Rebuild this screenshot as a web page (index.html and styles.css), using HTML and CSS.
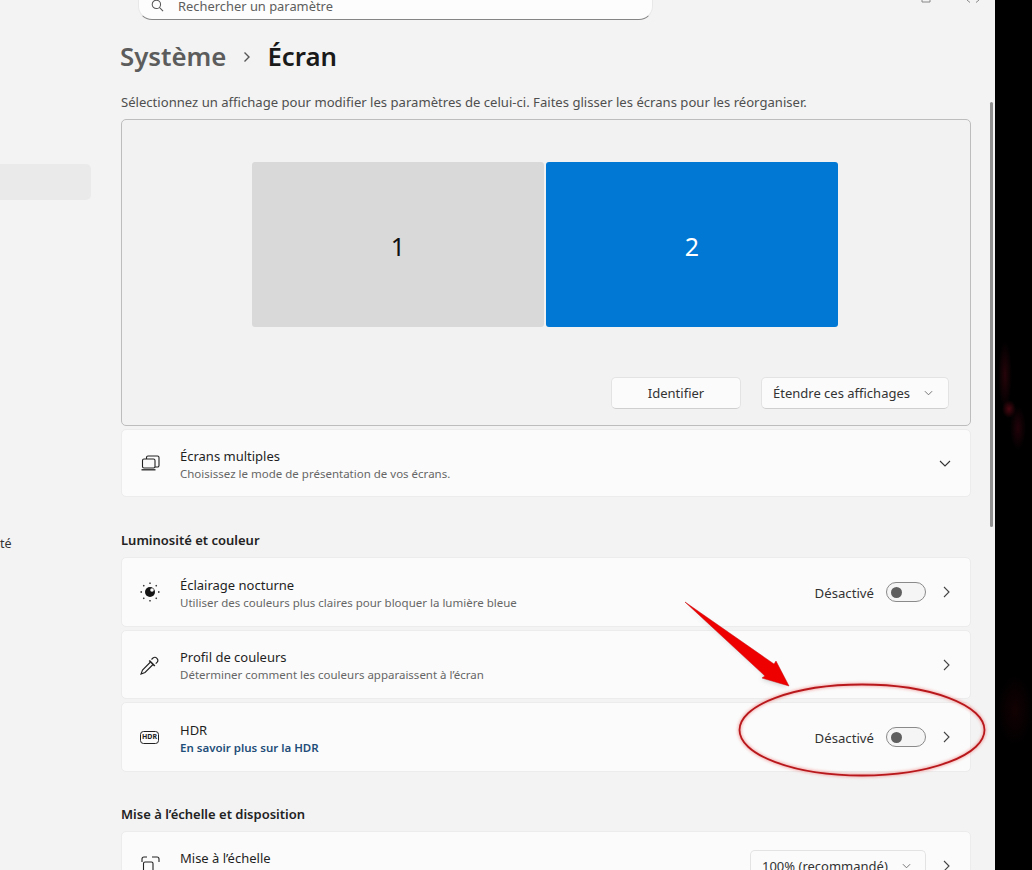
FILE: index.html
```html
<!DOCTYPE html>
<html lang="fr">
<head>
<meta charset="utf-8">
<title>Écran</title>
<link rel="stylesheet" href="styles.css">
</head>
<body>
<div class="window">
  <aside class="sidebar">
    <div class="nav-selected"></div>
    <div class="nav-cut">té</div>
  </aside>
  <main class="main">
    <header class="topbar">
      <div class="search">
        <svg class="search-icon" viewBox="0 0 14 14"><circle cx="5.800" cy="5.800" r="4.500"/><path d="M9 9l4 4"/></svg>
        <span>Rechercher un paramètre</span>
      </div>
    </header>
    <h1 class="crumbs">
      <span class="crumb-parent">Système</span>
      <svg class="crumb-sep" viewBox="0 0 8 12"><path d="M1.500 1.500L6 6l-4.500 4.500"/></svg>
      <span class="crumb-current">Écran</span>
    </h1>
    <p class="lead">Sélectionnez un affichage pour modifier les paramètres de celui-ci. Faites glisser les écrans pour les réorganiser.</p>
    <section class="panel">
      <div class="monitors">
        <div class="monitor">1</div>
        <div class="monitor active">2</div>
      </div>
      <div class="panel-actions">
        <button class="btn btn-identify">Identifier</button>
        <button class="btn btn-extend">Étendre ces affichages
          <svg class="chev-small" viewBox="0 0 10 6"><path d="M1 1l4 4 4-4"/></svg>
        </button>
      </div>
    </section>
    <div class="card card-after-panel">
      <svg class="row-icon" viewBox="0 0 20 20"><path d="M6.500 6V4.500A1.500 1.500 0 0 1 8 3h9.500A1.500 1.500 0 0 1 19 4.500v8a1.500 1.500 0 0 1-1.500 1.500H15"/><rect x="2.500" y="6" width="12.500" height="9" rx="1.500"/><path d="M1.500 16.800h14" class="base"/></svg>
      <div class="row-text"><div class="row-title">Écrans multiples</div><div class="row-sub">Choisissez le mode de présentation de vos écrans.</div></div>
      <svg class="chev-down" viewBox="0 0 12 7"><path d="M1 1l5 5 5-5"/></svg>
    </div>
    <h2 class="section">Luminosité et couleur</h2>
    <div class="card card-night">
      <svg class="row-icon" viewBox="0 0 20 20"><circle cx="10" cy="10" r="5" class="fill"/><circle cx="12" cy="8" r="1.800" class="shine"/><path d="M10 .5V2M10 18v1.500M.5 10H2M18 10h1.500M3.300 3.300l1 1M15.700 15.700l1 1M3.300 16.700l1-1M15.700 4.300l1-1" class="rays"/></svg>
      <div class="row-text"><div class="row-title">Éclairage nocturne</div><div class="row-sub">Utiliser des couleurs plus claires pour bloquer la lumière bleue</div></div>
      <span class="state">Désactivé</span><span class="toggle"><span class="knob"></span></span>
      <svg class="chev-right" viewBox="0 0 7 12"><path d="M1 1l5 5-5 5"/></svg>
    </div>
    <div class="card card-profile">
      <svg class="row-icon" viewBox="0 0 20 20"><path d="M10.500 7L2.500 15 1 19l4-1.500 8-8"/><path d="M9.300 5.500l5.500 5.500" class="collar"/><path d="M11.500 4.500L13 3a3 3 0 0 1 4.200 4.200l-1.500 1.500"/></svg>
      <div class="row-text"><div class="row-title">Profil de couleurs</div><div class="row-sub">Déterminer comment les couleurs apparaissent à l’écran</div></div>
      <svg class="chev-right" viewBox="0 0 7 12"><path d="M1 1l5 5-5 5"/></svg>
    </div>
    <div class="card card-hdr">
      <span class="hdr-icon">HDR</span>
      <div class="row-text"><div class="row-title">HDR</div><div class="row-link">En savoir plus sur la HDR</div></div>
      <span class="state">Désactivé</span><span class="toggle"><span class="knob"></span></span>
      <svg class="chev-right" viewBox="0 0 7 12"><path d="M1 1l5 5-5 5"/></svg>
    </div>
    <h2 class="section section-scale">Mise à l’échelle et disposition</h2>
    <div class="card card-scale">
      <svg class="row-icon" viewBox="0 0 20 20"><path d="M2 12V9a2 2 0 0 1 2-2h3M12 7h5a2 2 0 0 1 2 2v3"/><rect x="3.500" y="12" width="9.500" height="10" rx="1.500"/></svg>
      <div class="row-text"><div class="row-title">Mise à l’échelle</div></div>
      <button class="btn btn-scale">100% (recommandé)
        <svg class="chev-small" viewBox="0 0 10 6"><path d="M1 1l4 4 4-4"/></svg>
      </button>
      <svg class="chev-right" viewBox="0 0 7 12"><path d="M1 1l5 5-5 5"/></svg>
    </div>
  </main>
  <div class="scrollbar"></div>
  <svg class="win-controls" viewBox="0 0 70 3"><path d="M14 0v2h8V0M59 0l3 2.500M71 0l-3 2.500" transform="translate(-7 0)"/></svg>
</div>
<div class="desktop"></div>
<svg class="annotation" viewBox="0 0 1032 870">
  <defs>
    <filter id="glow" x="-10%" y="-20%" width="120%" height="140%"><feGaussianBlur stdDeviation="1.600"/></filter>
    <filter id="arrow-shadow" x="-20%" y="-20%" width="140%" height="140%"><feGaussianBlur stdDeviation="2.500"/></filter>
  </defs>
  <path class="arrow-shade" d="M686 604L772 672l2-1 14 16-26-8 3-5z" filter="url(#arrow-shadow)"/>
  <path class="arrow" d="M685 602L774 664l2-3 13 25-27-8 3-2z"/>
  <ellipse class="ring-glow" cx="862" cy="730" rx="122.500" ry="45.500" filter="url(#glow)"/>
  <ellipse class="ring" cx="862" cy="730" rx="122.500" ry="45.500"/>
</svg>
</body>
</html>
```
FILE: styles.css
```css
* { box-sizing: border-box; }
html, body { margin: 0; height: 870px; overflow: hidden; }
body {
  display: flex;
  font-family: "Noto Sans", "Open Sans", sans-serif;
  background: #000;
  color: #1b1b1b;
}
button { font: inherit; color: inherit; }
.window {
  position: relative;
  width: 995px;
  height: 870px;
  flex: none;
  display: flex;
  background: #f3f3f3;
}
.desktop {
  flex: 1;
  background:
    radial-gradient(ellipse 7px 9px at 1009px 409px, #4a0811 0, transparent 100%),
    radial-gradient(ellipse 7px 34px at 1005px 375px, #25040a 0, transparent 100%),
    radial-gradient(ellipse 8px 22px at 1018px 428px, #22030a 0, transparent 100%),
    radial-gradient(ellipse 18px 36px at 1015px 710px, #120103 0, transparent 100%),
    #000;
  background-attachment: fixed;
}
.sidebar { width: 121px; flex: none; position: relative; padding-top: 164px; }
.nav-selected { width: 91px; height: 36px; background: #eaeaea; border-radius: 0 5px 5px 0; }
.nav-cut { margin-top: 335px; font-size: 12.500px; color: #333; line-height: 17px; }
.main { width: 850px; flex: none; display: flex; flex-direction: column; }
.topbar { height: 20px; overflow: hidden; margin-left: 17px; display: flex; align-items: flex-end; flex: none; }
.search {
  width: 515px; height: 33px; flex: none;
  background: #fdfdfd;
  border: 1px solid #e8e8e8;
  border-bottom: 1px solid #858585;
  border-radius: 0 0 14px 14px / 0 0 14px 14px;
  display: flex; align-items: center; padding: 4px 0 0 12px; gap: 14px;
  font-size: 12.900px; color: #5e5e5e;
}
.search-icon { width: 13px; height: 13px; fill: none; stroke: #555; stroke-width: 1.100; flex: none; }
.crumbs { margin: 19px 0 0 -1px; height: 35px; display: flex; align-items: center; font-size: 25.800px; font-weight: 600; line-height: 35px; }
.crumb-parent { color: #5c5c5c; }
.crumb-sep { width: 8px; height: 12px; margin: 0 16px 0 17px; fill: none; stroke: #555; stroke-width: 1.400; flex: none; }
.crumb-current { color: #1a1a1a; }
.lead { margin: 20px 0 0; font-size: 13.100px; line-height: 17px; color: #4f4f4f; height: 17px; white-space: nowrap; }
.panel {
  margin-top: 8px; height: 307px; flex: none;
  border: 1px solid #bdbdbd; border-radius: 5px;
  background: #f2f2f2;
  padding: 42px 21px 0;
  display: flex; flex-direction: column;
}
.monitors { display: flex; justify-content: center; gap: 2px; margin-right: 2px; }
.monitor {
  width: 292px; height: 165px;
  background: #d9d9d9; border-radius: 3px;
  display: flex; align-items: center; justify-content: center;
  padding-top: 2px;
  font-size: 25px; color: #111;
}
.monitor.active { background: #0078d4; color: #fff; }
.panel-actions { margin-top: 50px; display: flex; justify-content: flex-end; gap: 20px; }
.btn {
  height: 32px; border: 1px solid #e3e3e3; border-bottom-color: #cfcfcf;
  border-radius: 5px; background: #fbfbfb;
  font-size: 13px; color: #333; white-space: nowrap;
  display: flex; align-items: center; padding: 0;
}
.btn-identify { width: 130px; justify-content: center; }
.btn-extend { width: 188px; padding-left: 11px; justify-content: space-between; padding-right: 15px; }
.chev-small { width: 9px; height: 6px; fill: none; stroke: #666; stroke-width: 1; flex: none; }
.card {
  flex: none;
  background: #fbfbfb;
  border: 1px solid #ececec; border-radius: 5px;
  display: flex; align-items: center;
  padding: 0 19px 0 18px;
}
.card-after-panel { margin-top: 3px; height: 68px; }
.card-night { height: 70px; }
.card-profile { margin-top: 3px; height: 69px; }
.card-hdr { margin-top: 3px; height: 70px; }
.card-scale { height: 70px; align-items: flex-start; padding-top: 18px; }
.row-icon { width: 20px; height: 20px; flex: none; fill: none; stroke: #222; stroke-width: 1.100; margin-right: 20px; }
.row-icon .fill { fill: #151515; stroke: none; }
.row-icon .shine { fill: #fbfbfb; stroke: none; }
.row-icon .rays { stroke-width: 1.300; }
.row-icon .collar { stroke-width: 1.700; }
.row-icon .base { stroke-width: 1.300; }
.row-text { flex: 1; min-width: 0; padding-top: 3px; }
.card-profile .row-text { padding-top: 2px; }
.card-scale .row-text { padding-top: 0; }
.row-title { font-size: 13px; line-height: 17px; color: #1f1f1f; }
.row-sub { font-size: 11.500px; line-height: 15px; margin-top: 1px; color: #666; }
.row-link { font-size: 11.500px; line-height: 15px; margin-top: 1px; color: #1f4e79; font-weight: 600; }
.hdr-icon {
  width: 19px; height: 13px; flex: none; margin-right: 21px;
  border: 1.300px solid #222; border-radius: 3.500px;
  font-size: 7px; font-weight: 700; line-height: 10.500px; text-align: center; color: #222;
}
.state { font-size: 13.200px; color: #333; margin-right: 12px; margin-top: 2px; }
.toggle {
  width: 40px; height: 20px; flex: none;
  border: 1px solid #8a8a8a; border-radius: 10px;
  background: #f5f5f5;
  display: flex; align-items: center; padding-left: 4px;
  margin-right: 17px;
}
.knob { width: 11px; height: 11px; border-radius: 50%; background: #5f5f5f; }
.chev-right { width: 7px; height: 12px; flex: none; fill: none; stroke: #444; stroke-width: 1.100; margin-left: auto; margin-right: 1px; }
.toggle + .chev-right { margin-left: 0; }
.chev-down { width: 12px; height: 7px; flex: none; fill: none; stroke: #333; stroke-width: 1.100; }
.section { margin: 33px 0 7px; height: 20px; font-size: 13px; line-height: 20px; font-weight: 600; color: #222; flex: none; }
.section-scale { margin-top: 32px; }
.btn-scale { width: 176px; height: 32px; margin-right: 17px; padding: 0 14px 0 11px; justify-content: space-between; }
.card-scale .chev-right { margin-left: 0; margin-top: 10px; }
.scrollbar { position: absolute; left: 990px; top: 102px; width: 2.500px; height: 425px; background: #8f8f8f; border-radius: 2px; }
.win-controls { position: absolute; left: 915px; top: 0; width: 70px; height: 3px; fill: none; stroke: #888; stroke-width: 1; }
.annotation { position: absolute; left: 0; top: 0; width: 1032px; height: 870px; pointer-events: none; }
.arrow { fill: #ee0000; stroke: #c40d10; stroke-width: .5; }
.arrow-shade { fill: #777; opacity: .4; }
.ring { fill: none; stroke: #b8181b; stroke-width: 1.800; }
.ring-glow { fill: none; stroke: #f08a8a; stroke-width: 3.500; opacity: .7; }
```
